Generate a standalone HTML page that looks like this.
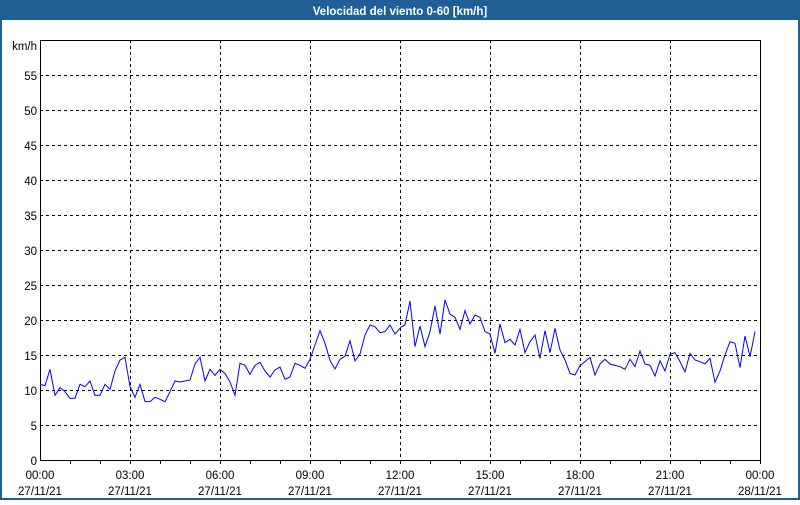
<!DOCTYPE html>
<html><head><style>
body{margin:0;width:800px;height:500px;overflow:hidden;background:#fff;font-family:"Liberation Sans",sans-serif}
</style></head><body>
<svg width="800" height="500" xmlns="http://www.w3.org/2000/svg" font-family="Liberation Sans, sans-serif" font-size="11.5">
<rect x="0" y="0" width="800" height="500" fill="#1f5f95"/>
<rect x="2" y="20" width="796" height="478" fill="#fff"/>
<text x="400" y="15" fill="#fff" font-weight="bold" text-anchor="middle" font-size="11.5">Velocidad del viento 0-60 [km/h]</text>
<g stroke="#000" stroke-width="1" stroke-dasharray="3,3" shape-rendering="crispEdges">
<line x1="40" y1="75.5" x2="760" y2="75.5"/><line x1="40" y1="110.5" x2="760" y2="110.5"/><line x1="40" y1="145.5" x2="760" y2="145.5"/><line x1="40" y1="180.5" x2="760" y2="180.5"/><line x1="40" y1="215.5" x2="760" y2="215.5"/><line x1="40" y1="250.5" x2="760" y2="250.5"/><line x1="40" y1="285.5" x2="760" y2="285.5"/><line x1="40" y1="320.5" x2="760" y2="320.5"/><line x1="40" y1="355.5" x2="760" y2="355.5"/><line x1="40" y1="390.5" x2="760" y2="390.5"/><line x1="40" y1="425.5" x2="760" y2="425.5"/>
<line x1="130.5" y1="40" x2="130.5" y2="460"/><line x1="220.5" y1="40" x2="220.5" y2="460"/><line x1="310.5" y1="40" x2="310.5" y2="460"/><line x1="400.5" y1="40" x2="400.5" y2="460"/><line x1="490.5" y1="40" x2="490.5" y2="460"/><line x1="580.5" y1="40" x2="580.5" y2="460"/><line x1="670.5" y1="40" x2="670.5" y2="460"/>
</g>
<g stroke="#000" stroke-width="1" shape-rendering="crispEdges" fill="none">
<path d="M40.5 40.5H760.5V460.5H40.5Z"/>
<path d="M70.5 460v4M100.5 460v4M130.5 460v4M160.5 460v4M190.5 460v4M220.5 460v4M250.5 460v4M280.5 460v4M310.5 460v4M340.5 460v4M370.5 460v4M400.5 460v4M430.5 460v4M460.5 460v4M490.5 460v4M520.5 460v4M550.5 460v4M580.5 460v4M610.5 460v4M640.5 460v4M670.5 460v4M700.5 460v4M730.5 460v4M760.5 460v4"/>
</g>
<g text-anchor="end" fill="#000">
<text x="37" y="50">km/h</text>
<text x="37" y="80">55</text><text x="37" y="115">50</text><text x="37" y="150">45</text><text x="37" y="185">40</text><text x="37" y="220">35</text><text x="37" y="255">30</text><text x="37" y="290">25</text><text x="37" y="325">20</text><text x="37" y="360">15</text><text x="37" y="395">10</text><text x="37" y="430">5</text><text x="37" y="465">0</text>
</g>
<g text-anchor="middle" fill="#000">
<text x="40" y="479">00:00</text><text x="40" y="495">27/11/21</text>
<text x="130" y="479">03:00</text><text x="130" y="495">27/11/21</text>
<text x="220" y="479">06:00</text><text x="220" y="495">27/11/21</text>
<text x="310" y="479">09:00</text><text x="310" y="495">27/11/21</text>
<text x="400" y="479">12:00</text><text x="400" y="495">27/11/21</text>
<text x="490" y="479">15:00</text><text x="490" y="495">27/11/21</text>
<text x="580" y="479">18:00</text><text x="580" y="495">27/11/21</text>
<text x="670" y="479">21:00</text><text x="670" y="495">27/11/21</text>
<text x="760" y="479">00:00</text><text x="760" y="495">28/11/21</text>
</g>
<g fill="none" stroke="#0000ff" stroke-width="1">
<polyline vector-effect="non-scaling-stroke" transform="translate(0,290) scale(0.333333)" points="120,283 135,287 150,238 165,316 180,293 195,305 210,325 225,325 240,283 255,290 270,273 285,316 300,316 315,283 330,298 345,243 360,210 375,202 390,290 405,322 420,283 435,335 450,335 465,322 480,328 495,335 510,305 525,273 540,276 555,273 570,270 585,222 600,202 615,273 630,238 645,256 660,238 675,250 690,276 705,316 720,220 735,226 750,253 765,226 780,217 795,243 810,261 825,240 840,231 855,268 870,261 885,220 900,226 915,235 930,208 945,165 960,122 975,160 990,211 1005,237 1020,208 1035,199 1050,152 1065,213 1080,192 1095,135 1110,105 1125,110 1140,128 1155,125 1170,105 1185,132 1200,115"/>
<polyline vector-effect="non-scaling-stroke" transform="translate(400,290) scale(0.333333)" points="0,113 15,105 30,33 45,170 60,108 75,170 90,125 105,48 120,132 135,30 150,72 165,82 180,118 195,62 210,102 225,75 240,82 255,125 270,132 285,190 300,102 315,158 330,148 345,165 360,118 375,188 390,155 405,135 420,205 435,122 450,188 465,115 480,180 495,210 510,250 525,255 540,227 555,215 570,202 585,255 600,222 615,208 630,222 645,226 660,230 675,238 690,208 705,230 720,183 735,222 750,226 765,258 780,212 795,243 810,193 825,188 840,215 855,246 870,190 885,210 900,215 915,222 930,205 945,277 960,243 975,195 990,155 1005,160 1020,233 1035,138 1050,200 1065,125"/>
</g>
</svg>
</body></html>
